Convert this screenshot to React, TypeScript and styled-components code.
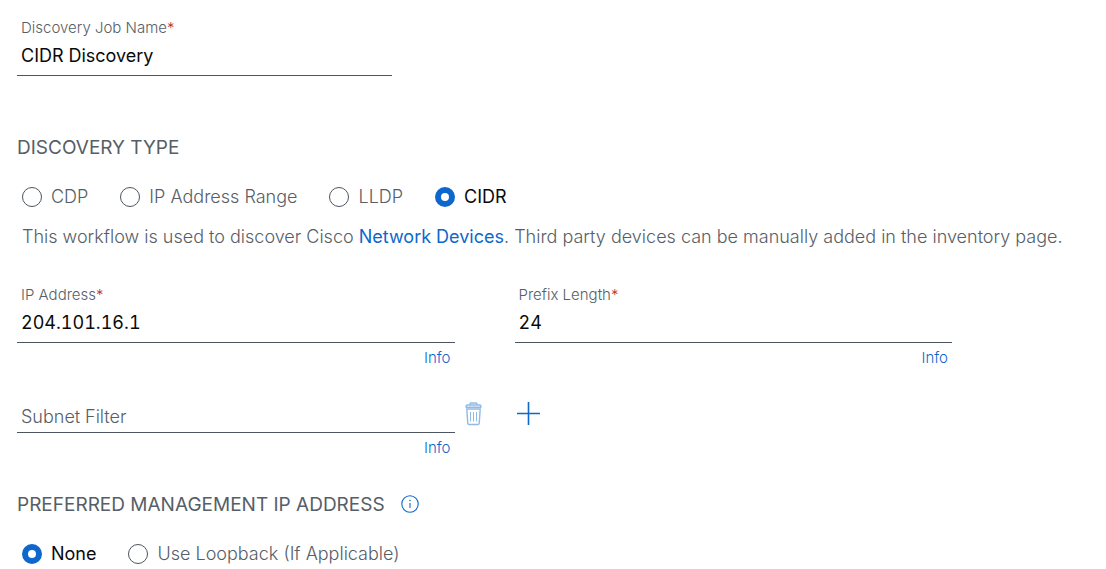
import React, { useState } from "react";
import styled, { createGlobalStyle } from "styled-components";

const color = {
  text: "#565e66",
  strong: "#0a0a0a",
  line: "#4c5560",
  link: "#0d67cc",
  required: "#b8321f",
};

const GlobalStyle = createGlobalStyle`
  *, *::before, *::after { box-sizing: border-box; }
  body {
    margin: 0;
    background: #fff;
    color: ${color.text};
    font-family: Inter, "Liberation Sans", sans-serif;
    font-size: 18px;
    font-weight: 300;
    line-height: 24px;
  }
`;

const Form = styled.form`
  padding: 18px 17px 4px;
`;

const JobField = styled.div`
  width: 35%;
`;

const FieldGrid = styled.div<{ $top: number }>`
  display: grid;
  grid-template-columns: minmax(0, 1fr) 60px minmax(0, 1fr) 137px;
  margin-top: ${(p) => p.$top}px;
`;

const FieldBox = styled.div`
  display: flex;
  flex-direction: column;
`;

const FieldLabel = styled.label`
  padding-left: 4px;
  font-size: 15px;
  line-height: 20px;
`;

const Required = styled.span`
  color: ${color.required};
`;

const TextInput = styled.input<{ $compact?: boolean }>`
  display: block;
  width: 100%;
  height: ${(p) => (p.$compact ? 32 : 38)}px;
  padding: 0 4px ${(p) => (p.$compact ? 0 : 2)}px;
  border: 0;
  border-bottom: 1px solid ${color.line};
  border-radius: 0;
  outline: 0;
  background: transparent;
  color: ${color.strong};
  font: inherit;
  font-weight: 400;
  font-variant-numeric: tabular-nums;

  &::placeholder {
    color: ${color.text};
    font-weight: 300;
    opacity: 1;
  }
`;

const InfoLink = styled.a`
  align-self: flex-end;
  margin: 5px 4px 0 0;
  color: ${color.link};
  font-size: 15px;
  line-height: 20px;
  text-decoration: none;
`;

const Heading = styled.h2<{ $top: number }>`
  display: flex;
  align-items: center;
  gap: 16px;
  margin: ${(p) => p.$top}px 0 0;
  font-size: 19px;
  font-weight: 400;
  line-height: 24px;
`;

const RadioRow = styled.div`
  display: flex;
  gap: 32px;
  margin-top: 25px;
  padding-left: 5px;
`;

const RadioLabel = styled.label<{ $on: boolean }>`
  display: flex;
  align-items: center;
  gap: 9px;
  color: ${(p) => (p.$on ? color.strong : color.text)};
  font-weight: ${(p) => (p.$on ? 400 : 300)};
`;

const Radio = styled.input`
  appearance: none;
  flex: none;
  width: 20px;
  height: 20px;
  margin: 0;
  border: 1px solid ${color.line};
  border-radius: 50%;
  background: #fff;

  &:checked {
    border: 6px solid ${color.link};
  }
`;

const Note = styled.p`
  margin: 16px 0 0;
  padding-left: 5px;
`;

const TextLink = styled.a`
  color: ${color.link};
  font-weight: 400;
  text-decoration: none;
`;

const IconButton = styled.button`
  display: flex;
  align-self: start;
  justify-self: start;
  padding: 0;
  border: 0;
  background: none;
  color: ${color.link};

  &:disabled {
    opacity: 0.45;
  }
`;

const TrashCell = styled.div`
  padding-left: 10px;
`;

const InfoButton = styled(IconButton)`
  align-self: center;
`;

function TrashIcon() {
  return (
    <svg width="17" height="26" viewBox="0 0 17 26" fill="none" stroke="currentColor" strokeWidth="1.4">
      <path d="M5 4V2.8Q5 2 5.800 2H11Q12 2 12 2.800V4" />
      <path d="M1.200 6.300V4.800Q1.200 4 2 4H15Q15.800 4 15.800 4.800V6.300Z" />
      <path d="M1.800 8H15.200L14.200 22.300Q14 23.500 12.800 23.500H4.200Q3 23.500 2.800 22.300Z" />
      <path d="M5.500 11V20.500M8.500 11V20.500M11.500 11V20.500" strokeWidth="1" />
    </svg>
  );
}

function PlusIcon() {
  return (
    <svg width="26" height="26" viewBox="0 0 26 26" fill="none" stroke="currentColor" strokeWidth="1.6">
      <path d="M2 12.500H25M13.500 1V24" />
    </svg>
  );
}

function InfoIcon() {
  return (
    <svg width="18" height="20" viewBox="0 0 18 20" fill="none" stroke="currentColor" strokeWidth="1.1">
      <circle cx="9" cy="9" r="8.200" />
      <path d="M9 8V13" />
      <circle cx="9" cy="5.500" r="0.800" fill="currentColor" stroke="none" />
    </svg>
  );
}

type FieldProps = {
  id: string;
  label: string;
  value: string;
  info?: boolean;
};

function Field({ id, label, value, info }: FieldProps) {
  return (
    <FieldBox>
      <FieldLabel htmlFor={id}>
        {label}
        <Required>*</Required>
      </FieldLabel>
      <TextInput id={id} defaultValue={value} required />
      {info && <InfoLink href="#info">Info</InfoLink>}
    </FieldBox>
  );
}

type RadioGroupProps = { name: string; options: string[]; initial: string };

function RadioGroup({ name, options, initial }: RadioGroupProps) {
  const [selected, setSelected] = useState(initial);
  return (
    <RadioRow role="radiogroup" aria-labelledby={name}>
      {options.map((option) => (
        <RadioLabel key={option} $on={option === selected}>
          <Radio
            type="radio"
            name={name}
            checked={option === selected}
            onChange={() => setSelected(option)}
          />
          {option}
        </RadioLabel>
      ))}
    </RadioRow>
  );
}

export default function App() {
  return (
    <>
      <GlobalStyle />
      <Form>
        <JobField>
          <Field id="job-name" label="Discovery Job Name" value="CIDR Discovery" />
        </JobField>

        <Heading id="discovery-type" $top={60}>DISCOVERY TYPE</Heading>
        <RadioGroup
          name="discovery-type"
          options={["CDP", "IP Address Range", "LLDP", "CIDR"]}
          initial="CIDR"
        />
        <Note>
          This workflow is used to discover Cisco <TextLink href="#devices">Network Devices</TextLink>. Third party
          devices can be manually added in the inventory page.
        </Note>

        <FieldGrid $top={36}>
          <Field id="ip-address" label="IP Address" value="204.101.16.1" info />
          <span />
          <Field id="prefix-length" label="Prefix Length" value="24" info />
        </FieldGrid>

        <FieldGrid $top={33}>
          <FieldBox>
            <TextInput $compact placeholder="Subnet Filter" aria-label="Subnet Filter" />
            <InfoLink href="#info">Info</InfoLink>
          </FieldBox>
          <TrashCell>
            <IconButton type="button" disabled aria-label="Delete subnet filter">
              <TrashIcon />
            </IconButton>
          </TrashCell>
          <IconButton type="button" aria-label="Add subnet filter">
            <PlusIcon />
          </IconButton>
        </FieldGrid>

        <Heading id="management-ip" $top={35}>
          PREFERRED MANAGEMENT IP ADDRESS
          <InfoButton type="button" aria-label="About the management IP address">
            <InfoIcon />
          </InfoButton>
        </Heading>
        <RadioGroup
          name="management-ip"
          options={["None", "Use Loopback (If Applicable)"]}
          initial="None"
        />
      </Form>
    </>
  );
}
